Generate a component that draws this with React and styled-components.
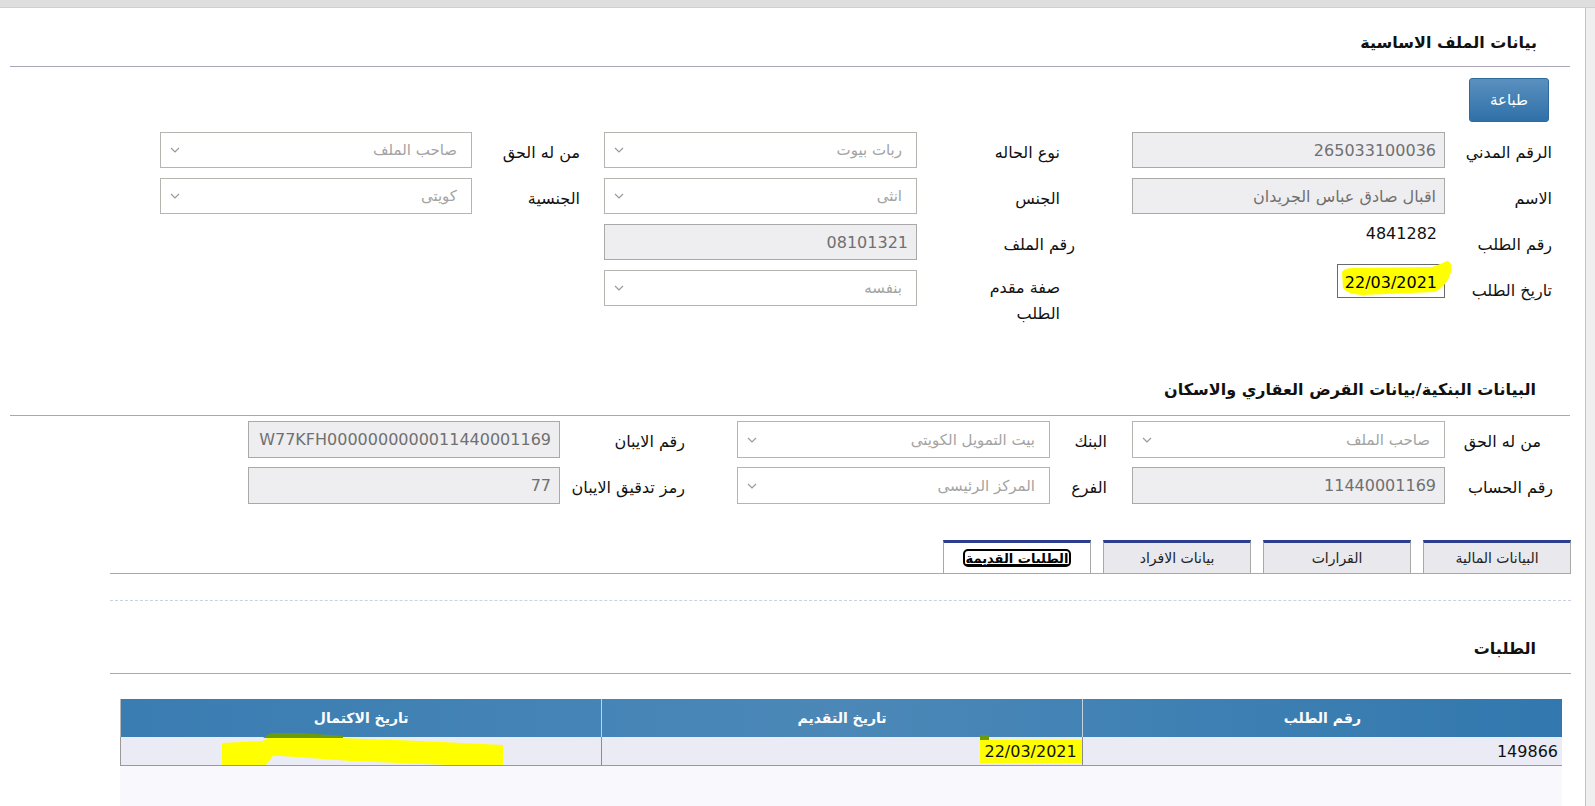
import React from "react";
import styled, { createGlobalStyle } from "styled-components";

const GlobalStyle = createGlobalStyle`
  html, body { margin: 0; padding: 0; background: #fff; }
  body { font-family: "DejaVu Sans", "Liberation Sans", sans-serif; overflow: hidden; }
  * { box-sizing: border-box; }
`;

const Page = styled.div`
  width: 1595px;
  height: 806px;
  direction: rtl;
  display: flex;
  flex-direction: column;
  overflow: hidden;
  background: #fff;
`;

const TopBand = styled.div`
  flex: none;
  height: 8px;
  background: #dedede;
  border-bottom: 1px solid #d0d0d0;
`;

const Frame = styled.div`
  flex: 1;
  display: flex;
  min-height: 0;
`;

const EdgeStrip = styled.div`
  flex: none;
  width: 10px;
  background: #efefef;
  border-left: 1px solid #c2c2c2;
`;

const Main = styled.main`
  flex: 1;
  display: flex;
  flex-direction: column;
  min-width: 0;
`;

const Section = styled.section`
  margin: 0 15px 0 10px;
`;

const SectionTitle = styled.h2`
  margin: ${(p) => p.$top}px 0 0;
  padding-right: ${(p) => p.$pad}px;
  font-size: 16px;
  font-weight: bold;
  line-height: 24px;
  color: #111;
`;

const Divider = styled.div`
  height: 1px;
  background: #aaa6b8;
  margin-top: ${(p) => p.$gap}px;
`;

const ButtonRow = styled.div`
  display: flex;
  margin-top: 11px;
  padding-right: 21px;
`;

const PrintButton = styled.button`
  width: 80px;
  height: 44px;
  border: 1px solid #2f6a9e;
  border-radius: 3px;
  background: linear-gradient(#5a90bf, #2f70a8);
  color: #fff;
  font-family: inherit;
  font-size: 15px;
  cursor: pointer;
`;

const FieldGrid = styled.div`
  display: grid;
  grid-template-columns: ${(p) => p.$cols};
  grid-template-rows: repeat(${(p) => p.$rows}, ${(p) => p.$rowH}px);
  row-gap: ${(p) => p.$gap}px;
  margin-top: ${(p) => p.$top}px;
`;

const Label = styled.div`
  display: flex;
  align-items: center;
  padding-right: ${(p) => p.$pad}px;
  padding-top: 4px;
  font-size: 16px;
  color: #111;
  white-space: nowrap;
`;

const WrapLabel = styled.div`
  align-self: start;
  padding-right: ${(p) => p.$pad}px;
  padding-top: 5px;
  font-size: 16px;
  line-height: 26px;
  color: #111;
`;

const Spacer = styled.div`
  grid-column: span ${(p) => p.$span};
`;

const TextBox = styled.div`
  height: 100%;
  border: 1px solid #a9a9a9;
  background: #eeeef0;
  color: #707070;
  font-size: 16px;
  display: flex;
  align-items: center;
  padding-right: 8px;
  white-space: nowrap;
  overflow: hidden;
`;

const SelectBox = styled.div`
  height: 100%;
  border: 1px solid #b3b5ae;
  background: #fff;
  color: #a3a3a3;
  font-size: 15px;
  display: flex;
  align-items: center;
  justify-content: space-between;
  padding: 0 14px 0 9px;
  white-space: nowrap;
`;

const ValueText = styled.div`
  align-self: start;
  padding-right: 8px;
  font-size: 16px;
  line-height: 20px;
  color: #111;
`;

const DateBox = styled.div`
  position: relative;
  justify-self: start;
  align-self: start;
  width: 108px;
  height: 34px;
  margin-top: -6px;
  border: 1px solid #6a6a6a;
  background: #fff;
  display: flex;
  align-items: center;
  padding-right: 7px;
  padding-top: 2px;
  font-size: 16px;
  color: #000;
`;

const DateText = styled.span`
  position: relative;
`;

const MarkerSvg = styled.svg`
  position: absolute;
  overflow: visible;
  left: ${(p) => p.$left}px;
  top: ${(p) => p.$top}px;
  pointer-events: none;
`;

const LowerArea = styled.div`
  flex: 1;
  display: flex;
  flex-direction: column;
  margin: 36px 14px 0 110px;
  min-height: 0;
`;

const TabList = styled.div`
  display: flex;
  gap: 12px;
  height: 34px;
  border-bottom: 1px solid #a8a8a8;
`;

const Tab = styled.div`
  width: 148px;
  height: 33px;
  border-top: 3px solid #2c3f8e;
  border-left: 1px solid #a8a8a8;
  border-right: 1px solid #a8a8a8;
  background: ${(p) => (p.$active ? "#fff" : "#e8e8ed")};
  display: flex;
  align-items: center;
  justify-content: center;
  font-size: 14px;
  color: #222;
`;

const FocusedLabel = styled.span`
  height: 18px;
  padding: 0 1px;
  border: 2px solid #000;
  border-radius: 5px;
  display: flex;
  align-items: center;
  justify-content: center;
  font-size: 13px;
  font-weight: bold;
  text-decoration: underline;
  white-space: nowrap;
  color: #000;
`;

const DashedLine = styled.div`
  margin-top: 26px;
  border-top: 1px dashed #c9d1e2;
`;

const Panel = styled.div`
  flex: 1;
  margin: 25px 9px 0 10px;
  background: #f9f8fc;
`;

const HeadRow = styled.div`
  display: grid;
  grid-template-columns: repeat(3, 1fr);
  height: 38px;
  background: linear-gradient(90deg, #3a7db2, #4b88b8 50%, #3278ae);
  border-left: 1px solid #b8b8b8;
`;

const HeadCell = styled.div`
  display: flex;
  align-items: center;
  justify-content: center;
  color: #fff;
  font-weight: bold;
  font-size: 14px;
  border-left: 1px solid #c4d0dc;
  &:last-child { border-left: none; }
`;

const BodyRow = styled.div`
  display: grid;
  grid-template-columns: repeat(3, 1fr);
  height: 29px;
  background: #eaebf4;
  border-bottom: 1px solid #999;
  border-left: 1px solid #999;
`;

const BodyCell = styled.div`
  position: relative;
  display: flex;
  align-items: center;
  padding-right: ${(p) => p.$pad}px;
  font-size: 16px;
  color: #111;
  border-left: 1px solid #8c8c8c;
  &:last-child { border-left: none; }
`;

const Mark = styled.span`
  position: relative;
  display: inline-flex;
  align-items: center;
  height: 23px;
  padding: 0 5px 0 4px;
  background: #ffff00;
  &::before {
    content: "";
    position: absolute;
    left: 0;
    top: -5px;
    width: 9px;
    height: 5px;
    background: #6a9c0a;
  }
`;

const Chevron = () => (
  <svg width="10" height="6" viewBox="0 0 10 6">
    <path d="M1 1 L5 5 L9 1" fill="none" stroke="#9a9a9a" strokeWidth="1.2" />
  </svg>
);

const Select = ({ value }) => (
  <SelectBox>
    <span>{value}</span>
    <Chevron />
  </SelectBox>
);

export default function App() {
  return (
    <Page>
      <GlobalStyle />
      <TopBand />
      <Frame>
        <EdgeStrip />
        <Main>
          <Section>
            <SectionTitle $top={23} $pad={33}>بيانات الملف الاساسية</SectionTitle>
            <Divider $gap={11} />
            <ButtonRow>
              <PrintButton>طباعة</PrintButton>
            </ButtonRow>
            <FieldGrid
              $cols="125px 313px 215px 313px 132px 312px"
              $rows={4}
              $rowH={36}
              $gap={10}
              $top={10}
            >
              <Label $pad={18}>الرقم المدني</Label>
              <TextBox>265033100036</TextBox>
              <Label $pad={72}>نوع الحاله</Label>
              <Select value="ربات بيوت" />
              <Label $pad={24}>من له الحق</Label>
              <Select value="صاحب الملف" />

              <Label $pad={18}>الاسم</Label>
              <TextBox>اقبال صادق عباس الجريدان</TextBox>
              <Label $pad={72}>الجنس</Label>
              <Select value="انثى" />
              <Label $pad={24}>الجنسية</Label>
              <Select value="كويتى" />

              <Label $pad={18}>رقم الطلب</Label>
              <ValueText>4841282</ValueText>
              <Label $pad={57}>رقم الملف</Label>
              <TextBox>08101321</TextBox>
              <Spacer $span={2} />

              <Label $pad={18}>تاريخ الطلب</Label>
              <DateBox>
                <MarkerSvg $left={-1} $top={-1} width="118" height="36" viewBox="0 0 118 36">
                  <path
                    d="M5 8 Q8 4 15 4 L95 3 Q104 0 110 -3 Q116 -3 114 8 Q110 22 98 28 L25 31 Q10 30 6 24 Z"
                    fill="#ffff00"
                  />
                </MarkerSvg>
                <DateText>22/03/2021</DateText>
              </DateBox>
              <WrapLabel $pad={72}>
                صفة مقدم
                <br />
                الطلب
              </WrapLabel>
              <Select value="بنفسه" />
              <Spacer $span={2} />
            </FieldGrid>

            <SectionTitle $top={72} $pad={34}>البيانات البنكية/بيانات القرض العقاري والاسكان</SectionTitle>
            <Divider $gap={13} />
            <FieldGrid
              $cols="125px 313px 82px 313px 177px 312px"
              $rows={2}
              $rowH={37}
              $gap={9}
              $top={5}
            >
              <Label $pad={29}>من له الحق</Label>
              <Select value="صاحب الملف" />
              <Label $pad={25}>البنك</Label>
              <Select value="بيت التمويل الكويتى" />
              <Label $pad={52}>رقم الايبان</Label>
              <TextBox>W77KFH0000000000011440001169</TextBox>

              <Label $pad={17}>رقم الحساب</Label>
              <TextBox>11440001169</TextBox>
              <Label $pad={25}>الفرع</Label>
              <Select value="المركز الرئيسى" />
              <Label $pad={52}>رمز تدقيق الايبان</Label>
              <TextBox>77</TextBox>
            </FieldGrid>
          </Section>

          <LowerArea>
            <TabList>
              <Tab>البيانات المالية</Tab>
              <Tab>القرارات</Tab>
              <Tab>بيانات الافراد</Tab>
              <Tab $active>
                <FocusedLabel>الطلبات القديمة</FocusedLabel>
              </Tab>
            </TabList>
            <DashedLine />
            <SectionTitle $top={36} $pad={35}>الطلبات</SectionTitle>
            <Divider $gap={12} />
            <Panel>
              <HeadRow>
                <HeadCell>رقم الطلب</HeadCell>
                <HeadCell>تاريخ التقديم</HeadCell>
                <HeadCell>تاريخ الاكتمال</HeadCell>
              </HeadRow>
              <BodyRow>
                <BodyCell $pad={4}>149866</BodyCell>
                <BodyCell $pad={0}>
                  <Mark>22/03/2021</Mark>
                </BodyCell>
                <BodyCell $pad={0}>
                  <MarkerSvg $left={90} $top={-10} width="300" height="40" viewBox="90 -10 300 40">
                    <path
                      d="M101 6 L142 4 L148 0 L220 1 L300 4 L382 8 L382 28 L327 28 L230 24 L160 19 L152 19 L145 28 L101 28 Z"
                      fill="#ffff00"
                    />
                    <path d="M142 1 L150 -4 L180 -4 L222 -1 L222 1 Z" fill="#6a9c0a" />
                  </MarkerSvg>
                </BodyCell>
              </BodyRow>
            </Panel>
          </LowerArea>
        </Main>
      </Frame>
    </Page>
  );
}
